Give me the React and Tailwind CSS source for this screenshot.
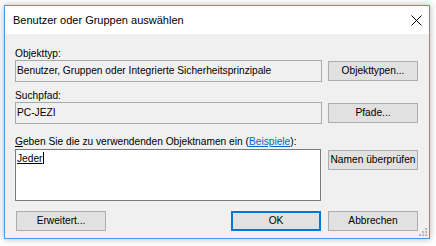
import React from "react";

const Btn = ({ children, primary, className = "" }) => (
  <div
    className={`w-[90px] h-[20px] flex items-center justify-center bg-[#e1e1e1] ${
      primary ? "border-2 border-[#0078d7]" : "border border-[#adadad]"
    } ${className}`}
  >
    {children}
  </div>
);

const App = () => {
  return (
    <div className="w-[436px] h-[246px] bg-white pl-[4px] pt-[5px] font-['Liberation_Sans',Arial,sans-serif] text-black">
      <div className="relative w-[426px] h-[234px] border border-[#4f97df] bg-[#f0f0f0] flex flex-col shadow-[0_0_7px_rgba(0,0,0,0.3)]">
        {/* Title bar */}
        <div className="h-[28px] bg-white flex items-center justify-between pl-[8px] pr-[7px] text-[11px]">
          <span>Benutzer oder Gruppen auswählen</span>
          <svg width="11" height="11" viewBox="0 0 11 11">
            <path d="M0.5 0.5 L10.5 10.5 M10.5 0.5 L0.5 10.5" stroke="#000" strokeWidth="1" />
          </svg>
        </div>

        {/* Body */}
        <div className="flex-1 flex flex-col pl-[10px] pr-[11px] pt-[13px] pb-[7px] text-[10.2px]">
          <div className="h-[13px] leading-[13px]">Objekttyp:</div>
          <div className="flex items-center gap-[6px]">
            <div className="flex-1 h-[22px] border border-[#a9a9a9] flex items-center pl-[1px]">
              Benutzer, Gruppen oder Integrierte Sicherheitsprinzipale
            </div>
            <Btn>Objekttypen...</Btn>
          </div>

          <div className="mt-[7px] h-[13px] leading-[13px]">Suchpfad:</div>
          <div className="flex items-center gap-[6px]">
            <div className="flex-1 h-[22px] border border-[#a9a9a9] flex items-center pl-[1px]">
              PC-JEZI
            </div>
            <Btn>Pfade...</Btn>
          </div>

          <div className="mt-[11px] h-[13px] leading-[13px]">
            <span className="underline">G</span>eben Sie die zu verwendenden Objektnamen ein (
            <span className="text-[#0066cc] underline">Beispiele</span>):
          </div>
          <div className="mt-[1px] flex items-start gap-[7px]">
            <div className="flex-1 h-[52px] bg-white border border-[#7a7a7a] pl-[1px] pt-[2px] leading-[13px]">
              <span className="underline">Jeder</span>
              <span className="inline-block w-px h-[12px] bg-black align-[-2px] ml-[1px]"></span>
            </div>
            <Btn className="mt-[1px] h-[19px]">Namen überprüfen</Btn>
          </div>

          <div className="mt-auto flex items-center gap-[7px]">
            <Btn className="ml-[1px]">Erweitert...</Btn>
            <div className="flex-1" />
            <Btn primary>OK</Btn>
            <Btn>Abbrechen</Btn>
          </div>
        </div>

        {/* Size grip */}
        <svg className="absolute right-[2px] bottom-[2px]" width="9" height="9" viewBox="0 0 9 9">
          <rect x="7" y="1" width="2" height="2" fill="#b8b8b8" />
          <rect x="4" y="4" width="2" height="2" fill="#b8b8b8" />
          <rect x="7" y="4" width="2" height="2" fill="#b8b8b8" />
          <rect x="1" y="7" width="2" height="2" fill="#b8b8b8" />
          <rect x="4" y="7" width="2" height="2" fill="#b8b8b8" />
          <rect x="7" y="7" width="2" height="2" fill="#b8b8b8" />
        </svg>
      </div>
    </div>
  );
};

export default App;
